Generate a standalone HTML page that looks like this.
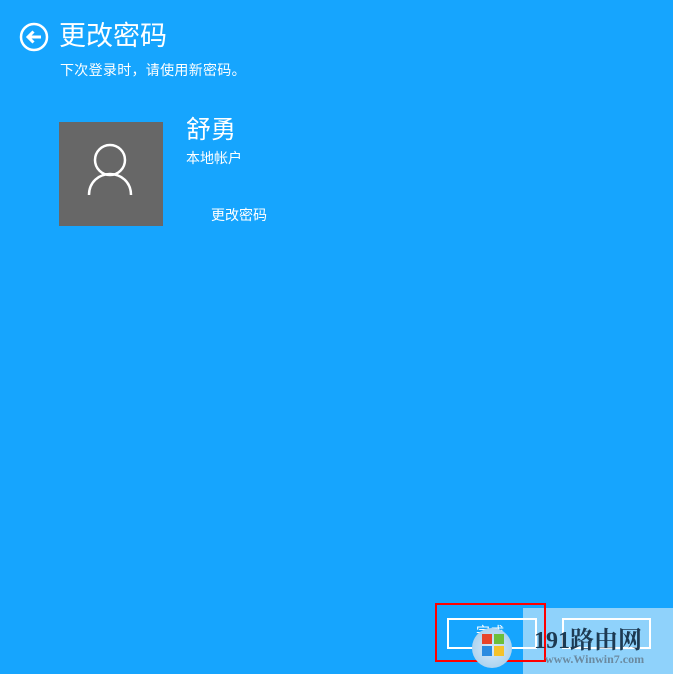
<!DOCTYPE html>
<html><head><meta charset="utf-8"><style>
html,body{margin:0;padding:0}
body{width:673px;height:674px;background:#16a5fe;position:relative;overflow:hidden;font-family:"Liberation Sans","Noto Sans CJK SC","Microsoft YaHei",sans-serif;color:#fff}
.a{position:absolute;white-space:nowrap}
</style></head><body>
<svg class="a" style="left:19px;top:22px" width="30" height="30" viewBox="0 0 30 30">
<circle cx="15" cy="15" r="13" fill="none" stroke="#fff" stroke-width="2.5"/>
<path d="M22 15H9M14.5 9.5L9 15l5.5 5.5" fill="none" stroke="#fff" stroke-width="3"/>
</svg>
<div class="a" style="left:59px;top:18px;font-size:27px;line-height:36px">更改密码</div>
<div class="a" style="left:60px;top:61px;font-size:14px;line-height:18px;letter-spacing:0.3px">下次登录时，请使用新密码。</div>
<div class="a" style="left:59px;top:122px;width:104px;height:104px;background:#676767"></div>
<svg class="a" style="left:59px;top:122px" width="104" height="104" viewBox="0 0 104 104">
<circle cx="51" cy="38" r="15" fill="none" stroke="#fff" stroke-width="2.5"/>
<path d="M30 73C30 60 40 52 51 52S72 60 72 73" fill="none" stroke="#fff" stroke-width="2.5"/>
</svg>
<div class="a" style="left:186px;top:114px;font-size:25px;line-height:32px">舒勇</div>
<div class="a" style="left:186px;top:149px;font-size:14px;line-height:18px">本地帐户</div>
<div class="a" style="left:211px;top:206px;font-size:14px;line-height:18px">更改密码</div>
<div class="a" style="left:523px;top:608px;width:150px;height:66px;background:#8fd2fb"></div>
<div class="a" style="left:447px;top:618px;width:86px;height:27px;border:2px solid #fff"></div>
<div class="a" style="left:476px;top:622px;font-size:14px;line-height:20px">完成</div>
<div class="a" style="left:562px;top:618px;width:85px;height:27px;border:2px solid #fff"></div>
<div class="a" style="left:435px;top:603px;width:107px;height:55px;border:2px solid #f00"></div>
<div class="a" style="left:472px;top:628px;width:40px;height:40px;border-radius:50%;background:radial-gradient(circle,#d8ecfb,#9cc9ea)"></div>
<div class="a" style="left:482px;top:634px;width:10px;height:10px;background:#e8442a"></div>
<div class="a" style="left:494px;top:634px;width:10px;height:10px;background:#6cbf3a"></div>
<div class="a" style="left:482px;top:646px;width:10px;height:10px;background:#2a8be0"></div>
<div class="a" style="left:494px;top:646px;width:10px;height:10px;background:#f5c22a"></div>
<div class="a" style="left:534px;top:626px;font-size:24px;line-height:30px;color:#1d3a52;font-weight:bold;font-family:'Liberation Serif','Noto Serif CJK SC',serif">191路由网</div>
<div class="a" style="left:545px;top:652px;font-size:12px;line-height:14px;color:#6b8aa0;font-family:'Liberation Serif',serif;font-weight:bold">www.Winwin7.com</div>
</body></html>
